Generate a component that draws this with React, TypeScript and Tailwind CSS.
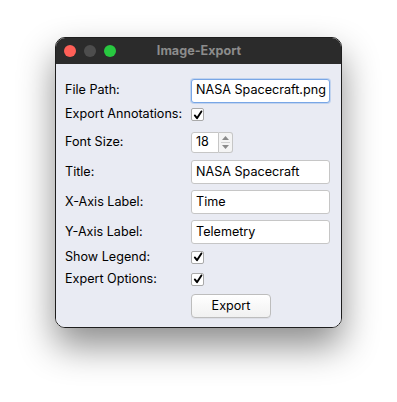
import React from "react";

const font = { fontFamily: 'Inter, "Liberation Sans", Arial, sans-serif' };

function Check() {
  return (
    <div className="w-[13px] h-[13px] bg-white border border-[#a9a9a9] rounded-[2px] flex items-center justify-center">
      <svg width="10" height="10" viewBox="0 0 10 10">
        <path d="M1.8 5.4 L4 8.2 L8.4 1.4" fill="none" stroke="#000" strokeWidth="1.9" strokeLinecap="round" strokeLinejoin="round" />
      </svg>
    </div>
  );
}

function Field({ value, focus }: { value: string; focus?: boolean }) {
  return (
    <div
      className={
        "w-[139px] h-[24px] bg-white rounded-[3px] flex items-center pl-[4px] text-[12.6px] text-black whitespace-nowrap overflow-hidden " +
        (focus ? "border border-[#78a6e6] shadow-[0_0_0_1px_rgba(120,166,230,0.35)]" : "border border-[#c6c6c6]")
      }
    >
      {value}
    </div>
  );
}

function Row({ h, label, children }: { h: string; label: string; children?: React.ReactNode }) {
  return (
    <div className={"flex items-center " + h}>
      <div className="w-[126px] text-[12.6px] text-black">{label}</div>
      {children}
    </div>
  );
}

export default function App() {
  return (
    <div className="w-[397px] h-[402px] bg-white pt-[37px] pl-[55px]" style={font}>
      <div className="w-[287px] h-[291px] rounded-[10px] border border-[#1e1e1e] overflow-hidden flex flex-col shadow-[0_18px_36px_rgba(0,0,0,0.45)]">
        <div className="h-[26px] bg-[#2b2b2b] flex items-center relative shrink-0">
          <div className="flex gap-[8px] pl-[8px]">
            <div className="w-[12px] h-[12px] rounded-full bg-[#fe5f57]" />
            <div className="w-[12px] h-[12px] rounded-full bg-[#4d4d4d]" />
            <div className="w-[12px] h-[12px] rounded-full bg-[#28c840]" />
          </div>
          <div className="absolute inset-0 flex items-center justify-center text-[12.6px] font-bold text-[#8c8c8c] pl-[1px]">
            Image-Export
          </div>
        </div>
        <div className="flex-1 bg-[#e9ebf3] pt-[14px] pl-[9px]">
          <Row h="h-[25px]" label="File Path:">
            <Field value="NASA Spacecraft.png" focus />
          </Row>
          <Row h="h-[23px]" label="Export Annotations:">
            <Check />
          </Row>
          <Row h="h-[32px]" label="Font Size:">
            <div className="flex h-[21px]">
              <div className="w-[28px] h-full bg-white border border-[#c6c6c6] rounded-l-[3px] flex items-center pl-[4px] text-[12.6px]">18</div>
              <div className="w-[14px] h-full bg-[#f4f4f4] border border-l-0 border-[#c6c6c6] rounded-r-[3px] flex flex-col items-center justify-center gap-[3px]">
                <svg width="7" height="4" viewBox="0 0 7 4"><path d="M0 4 L3.5 0 L7 4 Z" fill="#8a8a8a" /></svg>
                <div className="w-[9px] h-px bg-[#d0d0d0] -my-[1px]" />
                <svg width="7" height="4" viewBox="0 0 7 4"><path d="M0 0 L3.5 4 L7 0 Z" fill="#8a8a8a" /></svg>
              </div>
            </div>
          </Row>
          <Row h="h-[28px]" label="Title:">
            <Field value="NASA Spacecraft" />
          </Row>
          <Row h="h-[32px]" label="X-Axis Label:">
            <Field value="Time" />
          </Row>
          <Row h="h-[28px]" label="Y-Axis Label:">
            <Field value="Telemetry" />
          </Row>
          <Row h="h-[22px]" label="Show Legend:">
            <Check />
          </Row>
          <Row h="h-[22px]" label="Expert Options:">
            <Check />
          </Row>
          <Row h="h-[32px]" label="">
            <div className="w-[80px] h-[24px] rounded-[4px] border border-[#bdbdbd] bg-gradient-to-b from-white to-[#f1f1f1] flex items-center justify-center text-[12.6px] text-black shadow-[0_1px_0_rgba(0,0,0,0.05)]">
              Export
            </div>
          </Row>
        </div>
      </div>
    </div>
  );
}
